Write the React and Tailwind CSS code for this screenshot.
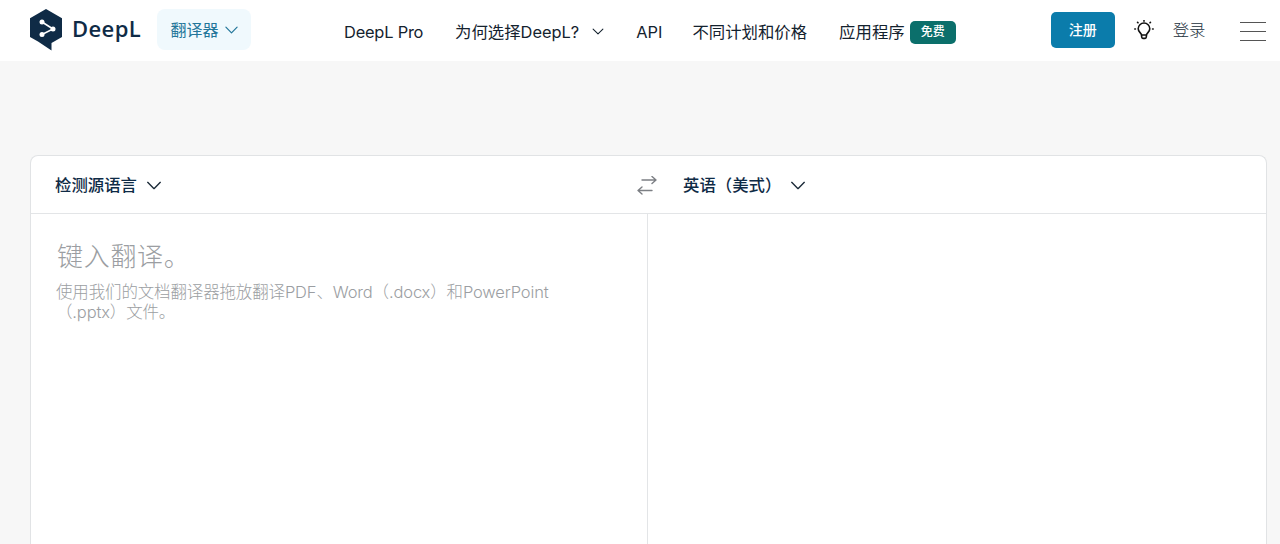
import React from "react";

const FONT = "font-['Inter','Noto_Sans_CJK_SC',sans-serif]";

function Chevron({ className }) {
  return (
    <svg viewBox="0 0 16 10" fill="none" stroke="currentColor" strokeWidth="1.5" strokeLinecap="round" strokeLinejoin="round" className={className}>
      <path d="M1 1.5 L8 8.5 L15 1.5" />
    </svg>
  );
}

function Logo() {
  return (
    <svg width="33" height="42" viewBox="0 0 33 42" className="shrink-0">
      <path d="M16 0 L32 9.3 L32 28 L21.5 34 L21.5 41.5 L8 32.5 L0 28 L0 9.3 Z" fill="#0f2b46" />
      <path d="M12 13 L23 20 L12 25.5" fill="none" stroke="#fff" strokeWidth="1.6" />
      <circle cx="12" cy="13" r="2.5" fill="#fff" />
      <circle cx="23" cy="20" r="2.5" fill="#fff" />
      <circle cx="12" cy="25.5" r="2.5" fill="#fff" />
    </svg>
  );
}

function Bulb() {
  return (
    <svg width="20" height="20" viewBox="0 0 20 20" fill="none" stroke="#111" strokeWidth="1.6" strokeLinecap="round" strokeLinejoin="round">
      <path d="M7.5 15 C7.3 12.8 4.2 12 4.2 8.8 A5.8 5.8 0 0 1 15.8 8.8 C15.8 12 12.7 12.8 12.5 15 L12.3 17 A1.5 1.5 0 0 1 11 18.4 L9 18.4 A1.5 1.5 0 0 1 7.7 17 Z" />
      <path d="M7.6 15 H12.4" />
      <path d="M10 0.6 V1.2 M3.6 2.4 L4 2.8 M16.4 2.4 L16 2.8 M0.8 9 H1.4 M18.6 9 H19.2" />
    </svg>
  );
}

function Swap() {
  return (
    <svg width="20" height="20" viewBox="0 0 20 20" fill="none" stroke="#7c7f84" strokeWidth="1.4" strokeLinecap="round" strokeLinejoin="round" className="shrink-0">
      <path d="M5 4 H19 M15 0.5 L19 4 L15 7.5" />
      <path d="M15 14.5 H1 M5 11 L1 14.5 L5 18" />
    </svg>
  );
}

export default function App() {
  return (
    <div className={`${FONT} h-[544px] w-[1280px] overflow-hidden bg-[#f7f7f7] text-[#0f2b46]`}>
      <header className="flex h-[61px] items-center bg-white pl-[30px]">
        <div className="mt-[-1px] flex items-center">
          <Logo />
          <span className="ml-[9px] mt-[-4px] w-[70px] whitespace-nowrap font-['Open_Sans',sans-serif] text-[22px] leading-none font-semibold tracking-[0.4px] text-[#0f2b46]">DeepL</span>
        </div>
        <button className="ml-[15px] mt-[-2px] flex h-[41px] w-[94px] items-center justify-center gap-[6px] rounded-lg bg-[#f0f9fd] text-[16px] font-normal text-[#23769a]">
          翻译器
          <Chevron className="h-[8px] w-[13px] text-[#23769a]" />
        </button>
        <nav className="ml-[93px] mt-[3px] flex items-center text-[16.4px] font-normal text-[#14222e]">
          <a className="w-[80px] whitespace-nowrap tracking-[-0.2px]">DeepL Pro</a>
          <a className="ml-[31px] flex items-center whitespace-nowrap">
            为何选择DeepL?
            <Chevron className="ml-[13px] h-[7px] w-[12px]" />
          </a>
          <a className="ml-[32px]">API</a>
          <a className="ml-[30px]">不同计划和价格</a>
          <a className="ml-[32px] flex items-center">
            应用程序
            <span className="ml-[5px] mt-[1px] flex h-[23px] w-[46px] items-center justify-center rounded-[5px] bg-[#0b6f6b] text-[12px] font-medium text-white">免费</span>
          </a>
        </nav>
        <button className="ml-[95px] mt-[-1px] h-[36px] w-[64px] rounded-[5px] bg-[#0b7cab] pb-[2px] text-[14px] font-medium text-white">注册</button>
        <span className="ml-[19px] mt-[-1px]"><Bulb /></span>
        <a className="ml-[19px] text-[16.4px] font-light text-[#22303c]">登录</a>
        <div className="ml-[35px] mt-[2px] flex w-[26px] flex-col gap-[8px]">
          <span className="h-px bg-[#555]" />
          <span className="h-px bg-[#555]" />
          <span className="h-px bg-[#555]" />
        </div>
      </header>

      <main className="ml-[30px] mt-[94px] h-[420px] w-[1237px] rounded-t-lg border border-b-0 border-[#e1e3e5] bg-white">
        <div className="flex h-[58px] items-center border-b border-[#e3e5e7] pt-[2px]">
          <div className="flex w-[606px] items-center pl-[24px] text-[16.4px] font-medium">
            检测源语言
            <Chevron className="ml-[9px] h-[9px] w-[16px] text-[#1b2a38]" />
          </div>
          <Swap />
          <div className="ml-[26px] flex items-center text-[16.4px] font-medium">
            英语（美式）
            <Chevron className="ml-[9px] h-[9px] w-[16px] text-[#1b2a38]" />
          </div>
        </div>
        <div className="flex h-full">
          <div className="h-full w-[617px] border-r border-[#e3e5e7] pl-[25px] pt-[25px] text-[#9b9ea2]">
            <p className="ml-[1px] text-[26px] leading-[36px] font-extralight tracking-[0.7px]">键入翻译。</p>
            <p className="mt-[7px] w-[505px] text-[16.5px] leading-[20px] font-light tracking-[-0.15px]">
              使用我们的文档翻译器拖放翻译PDF、Word（.docx）和PowerPoint（.pptx）文件。
            </p>
          </div>
          <div className="flex-1" />
        </div>
      </main>
    </div>
  );
}
